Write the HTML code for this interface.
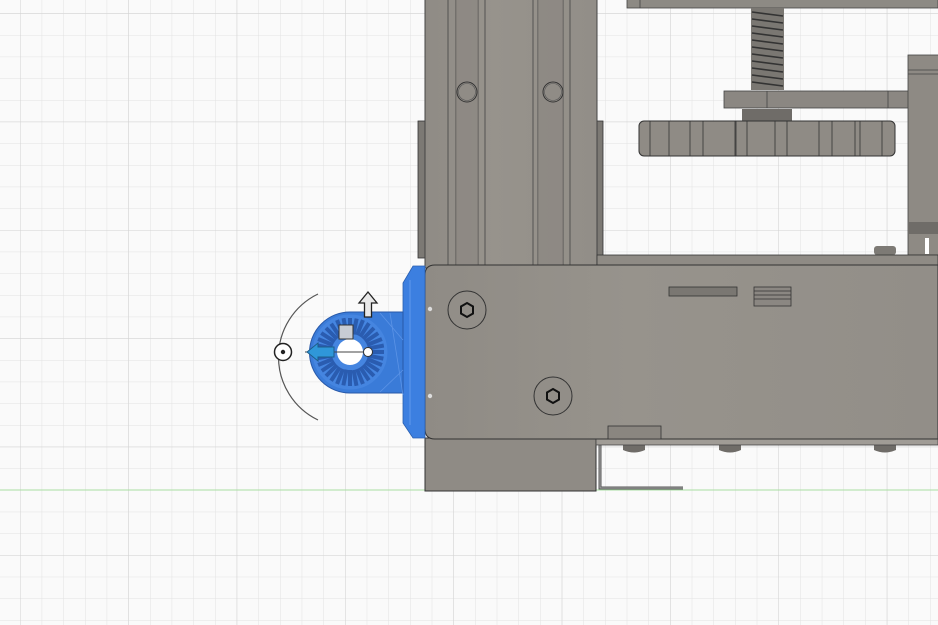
<!DOCTYPE html>
<html><head><meta charset="utf-8"><style>
html,body{margin:0;padding:0;background:#fafafa;}
svg{display:block}
</style></head><body>
<svg width="938" height="625" viewBox="0 0 938 625" xmlns="http://www.w3.org/2000/svg">
<defs>
<pattern id="g" x="20" y="13.3" width="21.67" height="21.67" patternUnits="userSpaceOnUse">
<path d="M0 0H21.67M0 0V21.67" stroke="#e2e2e2" stroke-width="1" fill="none"/>
</pattern>
<pattern id="G" x="20" y="13.3" width="108.35" height="108.35" patternUnits="userSpaceOnUse">
<path d="M0 0H108.35M0 0V108.35" stroke="#d2d2d2" stroke-width="1" fill="none"/>
</pattern>
<linearGradient id="pl" x1="0" x2="1"><stop offset="0" stop-color="#8f8b85"/><stop offset="0.4" stop-color="#97938c"/><stop offset="1" stop-color="#928e88"/></linearGradient>
</defs>
<rect width="938" height="625" fill="#fafafa"/>
<rect width="938" height="625" fill="url(#g)"/>
<rect width="938" height="625" fill="url(#G)"/>
<line x1="0" y1="490" x2="938" y2="490" stroke="#a9dfa2" stroke-width="1"/>

<rect x="627" y="-2" width="311" height="10" fill="#8d8a84" stroke="#444" stroke-width="0.8"/>
<line x1="640" y1="0" x2="640" y2="8" stroke="#444" stroke-width="0.8"/>
<rect x="751" y="8" width="33" height="82" fill="#7a7772"/>
<g stroke="#333" stroke-width="1.6">
<path d="M752 12L783 16M752 19L783 23M752 26L783 30M752 33L783 37M752 40L783 44M752 47L783 51M752 54L783 58M752 61L783 65M752 68L783 72M752 75L783 79M752 82L783 86"/>
</g>
<rect x="724" y="91" width="214" height="17" fill="#8b8782" stroke="#444" stroke-width="0.8"/>
<line x1="767" y1="91" x2="767" y2="108" stroke="#444" stroke-width="0.8"/>
<line x1="888" y1="91" x2="888" y2="108" stroke="#444" stroke-width="0.8"/>
<rect x="742" y="109" width="50" height="12" fill="#6f6c68"/>
<rect x="639" y="121" width="256" height="35" rx="5" fill="#8f8b85" stroke="#333" stroke-width="1"/>
<g stroke="#333" stroke-width="0.8">
<path d="M650 121V156M669 121V156M690 121V156M703 121V156M735 121V156M736 121V156M747 121V156M775 121V156M787 121V156M819 121V156M832 121V156M855 121V156M860 121V156M882 121V156"/>
</g>
<rect x="908" y="55" width="32" height="200" fill="#8e8a84" stroke="#444" stroke-width="0.8"/>
<line x1="908" y1="70" x2="938" y2="70" stroke="#444" stroke-width="0.8"/>
<line x1="908" y1="74" x2="938" y2="74" stroke="#444" stroke-width="0.8"/>
<rect x="908" y="222" width="30" height="12" fill="#6f6c68"/>
<rect x="925" y="238" width="4" height="16" fill="#fff"/>
<rect x="874" y="246" width="22" height="9" rx="3" fill="#7d7a75"/>

<rect x="418" y="121" width="8" height="137" fill="#7c7974" stroke="#333" stroke-width="0.8"/>
<rect x="596" y="121" width="7" height="137" fill="#7c7974" stroke="#333" stroke-width="0.8"/>
<rect x="425" y="-2" width="172" height="270" fill="url(#pl)" stroke="#444" stroke-width="1"/>
<g stroke="#444" stroke-width="0.8" fill="none">
<path d="M448 0V266M456 0V266M478 0V266M485 0V266M533 0V266M538 0V266M563 0V266M570 0V266"/>
</g>
<rect x="456" y="0" width="22" height="266" fill="#8a8680" opacity="0.6"/>
<rect x="538" y="0" width="25" height="266" fill="#8a8680" opacity="0.6"/>
<circle cx="467" cy="92" r="10" fill="#908c86" stroke="#333" stroke-width="1"/>
<circle cx="467" cy="92" r="8.5" fill="none" stroke="#555" stroke-width="0.6"/>
<circle cx="553" cy="92" r="10" fill="#908c86" stroke="#333" stroke-width="1"/>
<circle cx="553" cy="92" r="8.5" fill="none" stroke="#555" stroke-width="0.6"/>
<rect x="597" y="255" width="341" height="11" fill="#8f8b85" stroke="#333" stroke-width="0.8"/>

<rect x="425" y="438" width="171" height="53" fill="#8f8b85" stroke="#333" stroke-width="1"/>
<path d="M600 440V488H683" fill="none" stroke="#555" stroke-width="3"/>
<path d="M600 440V488H683" fill="none" stroke="#aaa" stroke-width="1"/>
<path d="M623 445h22v5q-11 5-22 0z" fill="#6f6c68"/>
<path d="M719 445h22v5q-11 5-22 0z" fill="#6f6c68"/>
<path d="M874 445h22v5q-11 5-22 0z" fill="#6f6c68"/>
<rect x="596" y="438" width="342" height="7" fill="#a09c96" stroke="#444" stroke-width="0.8"/>

<path d="M435 265H938V439H435Q425 439 425 429V275Q425 265 435 265Z" fill="url(#pl)" stroke="#333" stroke-width="1"/>
<rect x="669" y="287" width="68" height="9" fill="#7a7772" stroke="#333" stroke-width="0.8"/>
<rect x="754" y="287" width="37" height="19" fill="#8b8782" stroke="#333" stroke-width="0.8"/>
<path d="M754 291H791M754 295H791M754 299H791" stroke="#333" stroke-width="0.8"/>
<rect x="608" y="426" width="53" height="13" fill="#8a8680" stroke="#333" stroke-width="0.8"/>
<circle cx="467" cy="310" r="19" fill="#928e88" stroke="#333" stroke-width="1"/>
<polygon points="467,303 473,306.5 473,313.5 467,317 461,313.5 461,306.5" fill="none" stroke="#111" stroke-width="2"/>
<circle cx="553" cy="396" r="19" fill="#928e88" stroke="#333" stroke-width="1"/>
<polygon points="553,389 559,392.5 559,399.5 553,403 547,399.5 547,392.5" fill="none" stroke="#111" stroke-width="2"/>
<circle cx="430" cy="309" r="2.2" fill="#ddd"/>
<circle cx="430" cy="396" r="2.2" fill="#ddd"/>

<!-- blue part -->
<path d="M403 283L413 266H425V438H413L403 423Z" fill="#3c7fe0" stroke="#2a5fb0" stroke-width="0.8"/>
<path d="M410 280V425" stroke="#5a95ea" stroke-width="2" opacity="0.6"/>
<path d="M350 312H403V393H350A40.5 40.5 0 0 1 350 312Z" fill="#3a7bd8" stroke="#2858a8" stroke-width="1"/>
<path d="M380 313L403 340M380 392L403 370M390 313L403 395" stroke="#5b93e6" stroke-width="0.8" fill="none"/>
<circle cx="350" cy="352" r="36" fill="#4585e0"/>
<g stroke="#2a5cb0" stroke-width="4">
<g id="spk">
<path d="M350 318V334M350 370V386M316 352H332M368 352H384M326 328L337 339M363 365L374 376M326 376L337 365M363 339L374 328M337 320L343 335M357 369L363 384M337 384L343 369M357 335L363 320M318 339L333 345M367 359L382 365M318 365L333 359M367 345L382 339"/>
</g>
<g transform="rotate(11.25 350 352)"><path d="M350 318V334M350 370V386M316 352H332M368 352H384M326 328L337 339M363 365L374 376M326 376L337 365M363 339L374 328M337 320L343 335M357 369L363 384M337 384L343 369M357 335L363 320M318 339L333 345M367 359L382 365M318 365L333 359M367 345L382 339"/></g>
</g>
<circle cx="350" cy="352" r="36" fill="none" stroke="#4585e0" stroke-width="3"/>
<circle cx="350" cy="352" r="15" fill="#4585e0"/>
<circle cx="350" cy="352" r="13" fill="#fff"/>

<!-- gizmo -->
<path d="M318 294A70 70 0 0 0 318 420" fill="none" stroke="#555" stroke-width="1.2"/>
<circle cx="283" cy="352" r="8.5" fill="#fff" stroke="#222" stroke-width="1.5"/>
<circle cx="283" cy="352" r="2.2" fill="#222"/>
<line x1="305" y1="352" x2="368" y2="352" stroke="#444" stroke-width="1"/>
<circle cx="368" cy="352" r="4.5" fill="#fff" stroke="#333" stroke-width="1"/>
<path d="M307 352L318 343V347H334V357H318V361Z" fill="#2f97d9" stroke="#1d5d8a" stroke-width="1"/>
<path d="M368 292L377 303H371.5V317H364.5V303H359Z" fill="#e8e8e8" stroke="#222" stroke-width="1.3"/>
<rect x="339" y="325" width="14" height="14" fill="#c8ccd4" stroke="#333" stroke-width="1"/>
</svg>
</body></html>
